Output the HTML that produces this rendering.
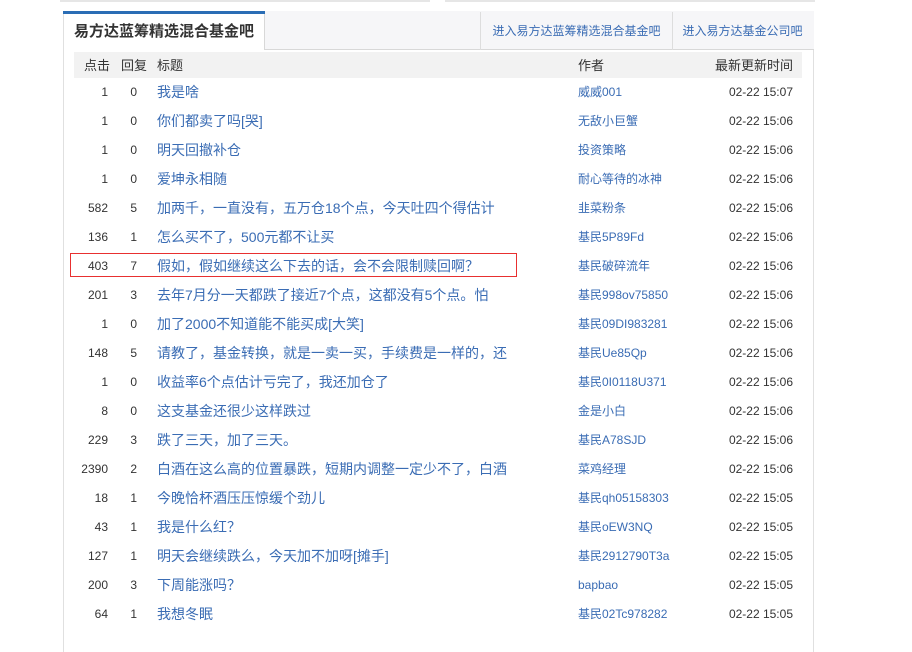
<!DOCTYPE html><html><head><meta charset="utf-8"><style>
body{margin:0;width:912px;height:628px;background:#fff;position:relative;overflow:hidden;font-family:"Liberation Sans","Noto Sans CJK SC",sans-serif;}
.a{position:absolute;white-space:nowrap}
.r{position:absolute;left:0;width:912px;height:29px;line-height:29px;font-size:12px}
.c1{position:absolute;right:804px;color:#333}
.c2{position:absolute;right:775px;color:#333}
.c3{position:absolute;left:157px;color:#3a6cb4;font-size:14px}
.c4{position:absolute;left:578px;color:#3a6cb4}
.c5{position:absolute;right:119px;color:#333}
</style></head><body>
<div class="a" style="left:60px;top:0;width:370px;height:2px;background:#e6e6e6"></div>
<div class="a" style="left:445px;top:0;width:370px;height:2px;background:#e6e6e6"></div>
<div class="a" style="left:63px;top:11px;width:749px;height:640px;border:1px solid #e0e0e0;border-bottom:none"></div>
<div class="a" style="left:264px;top:11px;width:549px;height:38px;background:#f6f6f8;border-bottom:1px solid #d8d8d8;border-left:1px solid #d8d8d8"></div>
<div class="a" style="left:63px;top:11px;width:202px;height:3px;background:#2a6db5"></div>
<div class="a" style="left:74px;top:19px;line-height:26px;font-size:15px;font-weight:bold;color:#333">易方达蓝筹精选混合基金吧</div>
<div class="a" style="left:480px;top:12px;width:191px;height:38px;border-left:1px solid #ddd;border-right:1px solid #ddd;text-align:center;line-height:38px;font-size:12px;color:#3a6cb4">进入易方达蓝筹精选混合基金吧</div>
<div class="a" style="left:672px;top:12px;width:141px;height:38px;text-align:center;line-height:38px;font-size:12px;color:#3a6cb4">进入易方达基金公司吧</div>
<div class="a" style="left:74px;top:52px;width:728px;height:26px;background:#f2f2f2"></div>
<div class="r" style="top:51px;font-size:13px"><span class="a" style="left:84px;color:#333">点击</span><span class="a" style="left:121px;color:#333">回复</span><span class="a" style="left:157px;color:#333">标题</span><span class="a" style="left:578px;color:#333">作者</span><span class="c5" style="font-size:13px">最新更新时间</span></div>
<div class="a" style="left:70px;top:253px;width:445px;height:22px;border:1px solid #e83030"></div>
<div class="r" style="top:78px"><span class="c1">1</span><span class="c2">0</span><span class="c3">我是啥</span><span class="c4">威威001</span><span class="c5">02-22 15:07</span></div>
<div class="r" style="top:107px"><span class="c1">1</span><span class="c2">0</span><span class="c3">你们都卖了吗[哭]</span><span class="c4">无敌小巨蟹</span><span class="c5">02-22 15:06</span></div>
<div class="r" style="top:136px"><span class="c1">1</span><span class="c2">0</span><span class="c3">明天回撤补仓</span><span class="c4">投资策略</span><span class="c5">02-22 15:06</span></div>
<div class="r" style="top:165px"><span class="c1">1</span><span class="c2">0</span><span class="c3">爱坤永相随</span><span class="c4">耐心等待的冰神</span><span class="c5">02-22 15:06</span></div>
<div class="r" style="top:194px"><span class="c1">582</span><span class="c2">5</span><span class="c3">加两千，一直没有，五万仓18个点，今天吐四个得估计</span><span class="c4">韭菜粉条</span><span class="c5">02-22 15:06</span></div>
<div class="r" style="top:223px"><span class="c1">136</span><span class="c2">1</span><span class="c3">怎么买不了，500元都不让买</span><span class="c4">基民5P89Fd</span><span class="c5">02-22 15:06</span></div>
<div class="r" style="top:252px"><span class="c1">403</span><span class="c2">7</span><span class="c3">假如，假如继续这么下去的话，会不会限制赎回啊？</span><span class="c4">基民破碎流年</span><span class="c5">02-22 15:06</span></div>
<div class="r" style="top:281px"><span class="c1">201</span><span class="c2">3</span><span class="c3">去年7月分一天都跌了接近7个点，这都没有5个点。怕</span><span class="c4">基民998ov75850</span><span class="c5">02-22 15:06</span></div>
<div class="r" style="top:310px"><span class="c1">1</span><span class="c2">0</span><span class="c3">加了2000不知道能不能买成[大笑]</span><span class="c4">基民09DI983281</span><span class="c5">02-22 15:06</span></div>
<div class="r" style="top:339px"><span class="c1">148</span><span class="c2">5</span><span class="c3">请教了，基金转换，就是一卖一买，手续费是一样的，还</span><span class="c4">基民Ue85Qp</span><span class="c5">02-22 15:06</span></div>
<div class="r" style="top:368px"><span class="c1">1</span><span class="c2">0</span><span class="c3">收益率6个点估计亏完了，我还加仓了</span><span class="c4">基民0I0118U371</span><span class="c5">02-22 15:06</span></div>
<div class="r" style="top:397px"><span class="c1">8</span><span class="c2">0</span><span class="c3">这支基金还很少这样跌过</span><span class="c4">金是小白</span><span class="c5">02-22 15:06</span></div>
<div class="r" style="top:426px"><span class="c1">229</span><span class="c2">3</span><span class="c3">跌了三天，加了三天。</span><span class="c4">基民A78SJD</span><span class="c5">02-22 15:06</span></div>
<div class="r" style="top:455px"><span class="c1">2390</span><span class="c2">2</span><span class="c3">白酒在这么高的位置暴跌，短期内调整一定少不了，白酒</span><span class="c4">菜鸡经理</span><span class="c5">02-22 15:06</span></div>
<div class="r" style="top:484px"><span class="c1">18</span><span class="c2">1</span><span class="c3">今晚恰杯酒压压惊缓个劲儿</span><span class="c4">基民qh05158303</span><span class="c5">02-22 15:05</span></div>
<div class="r" style="top:513px"><span class="c1">43</span><span class="c2">1</span><span class="c3">我是什么红？</span><span class="c4">基民oEW3NQ</span><span class="c5">02-22 15:05</span></div>
<div class="r" style="top:542px"><span class="c1">127</span><span class="c2">1</span><span class="c3">明天会继续跌么，今天加不加呀[摊手]</span><span class="c4">基民2912790T3a</span><span class="c5">02-22 15:05</span></div>
<div class="r" style="top:571px"><span class="c1">200</span><span class="c2">3</span><span class="c3">下周能涨吗？</span><span class="c4">bapbao</span><span class="c5">02-22 15:05</span></div>
<div class="r" style="top:600px"><span class="c1">64</span><span class="c2">1</span><span class="c3">我想冬眠</span><span class="c4">基民02Tc978282</span><span class="c5">02-22 15:05</span></div>
</body></html>
